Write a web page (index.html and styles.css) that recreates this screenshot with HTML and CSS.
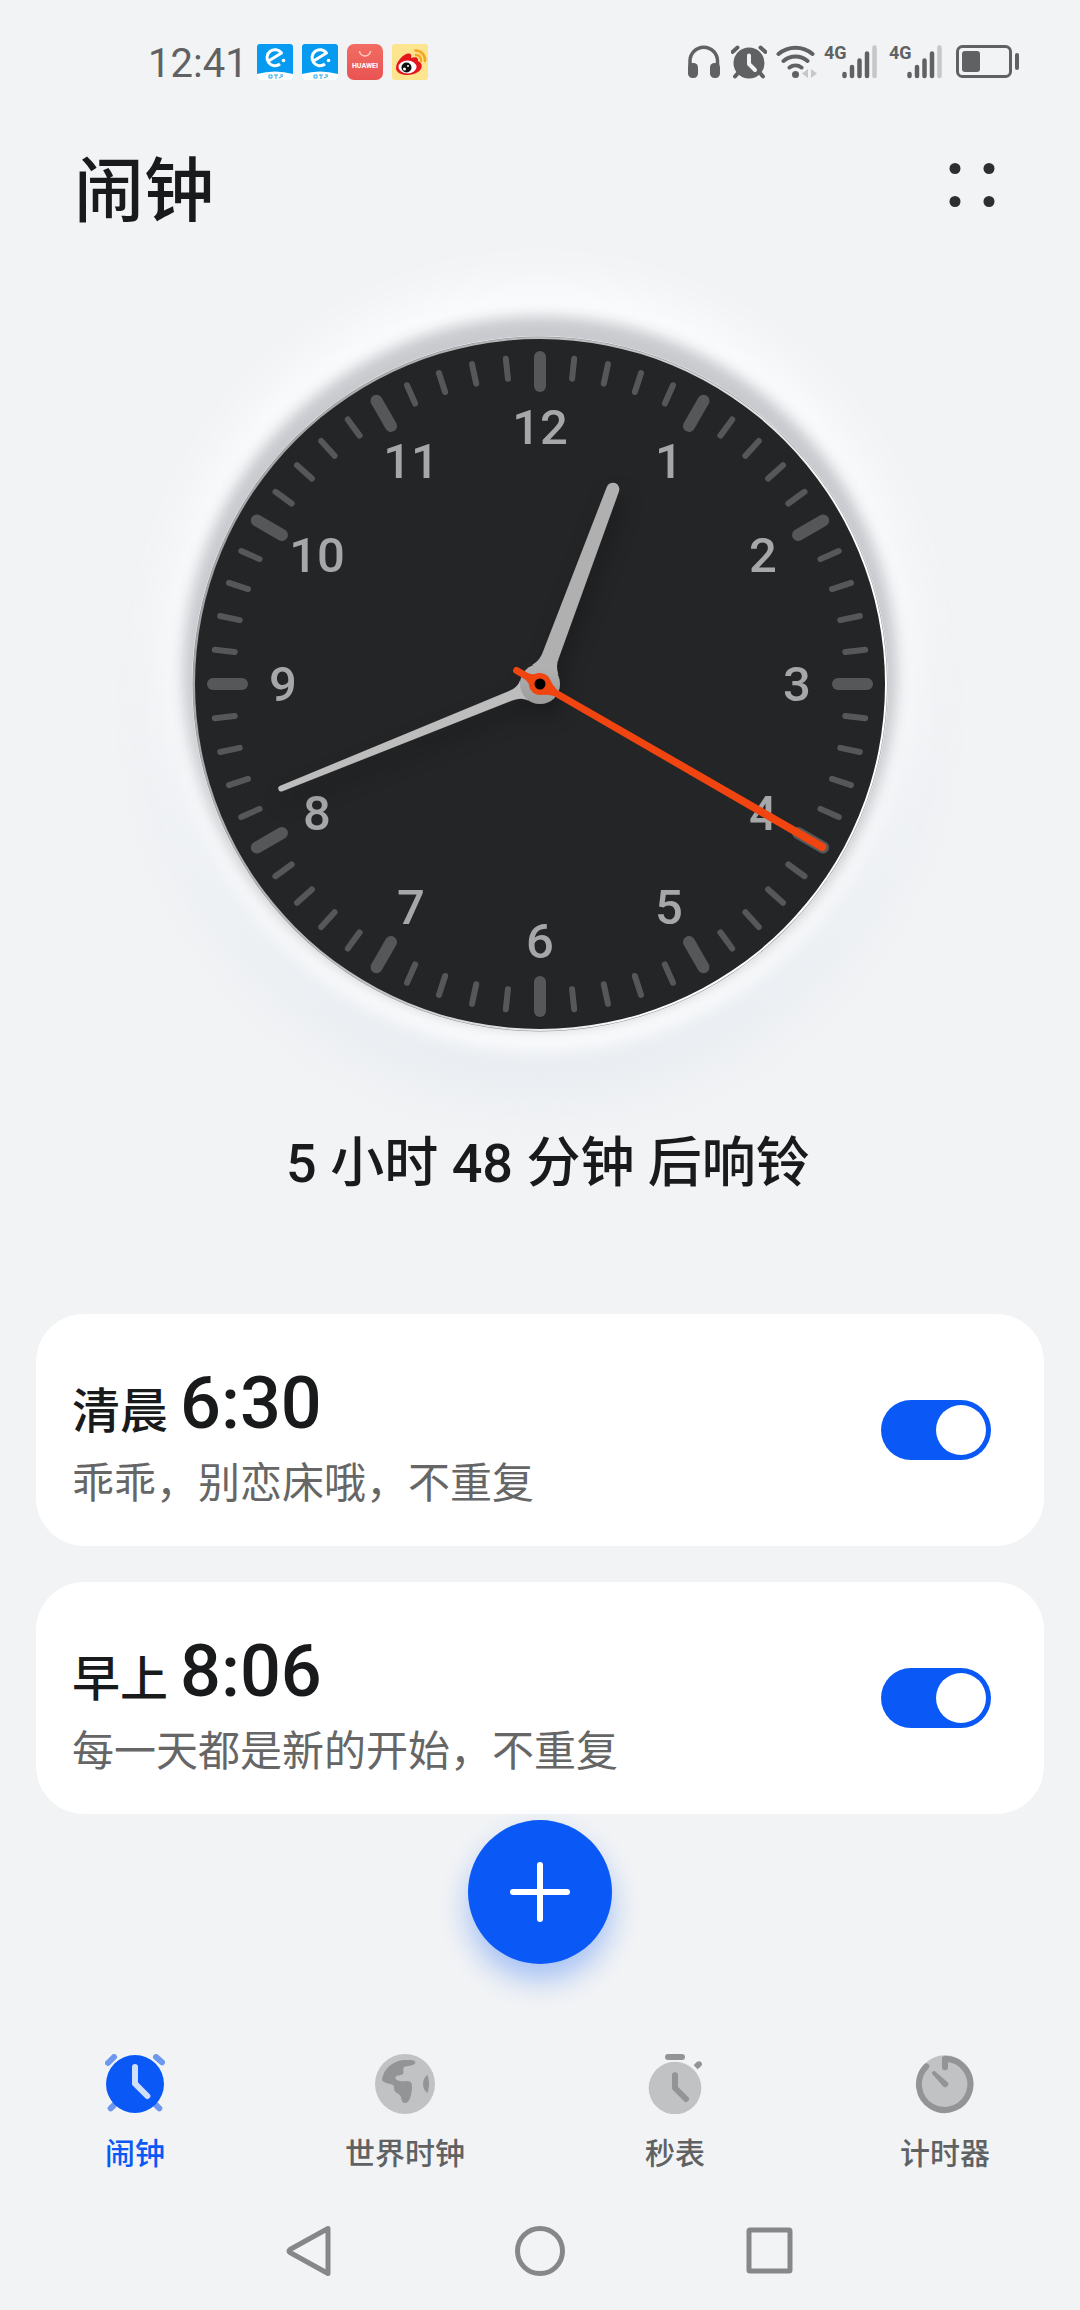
FILE: index.html
```html
<!DOCTYPE html>
<html lang="zh-CN">
<head>
<meta charset="utf-8">
<meta name="viewport" content="width=device-width, initial-scale=1">
<title>闹钟</title>
<link rel="stylesheet" href="styles.css">
</head>
<body>
<div class="screen">
  <div class="status">
    <div class="status-left">
      <span class="status-time">12:41</span>
      <svg class="app" viewBox="0 0 36 36" aria-hidden="true"><g id="ele">
        <rect width="36" height="36" rx="3" fill="#069bf0"/>
        <path d="M0 30Q18 25 36 30V34Q36 36 34 36H2Q0 36 0 34Z" fill="#fff"/>
        <path d="M11.500 17L24.500 9A8 8 0 1 0 23 20" fill="none" stroke="#fff" stroke-width="3" stroke-linejoin="round"/>
        <circle cx="26.500" cy="16.500" r="1.800" fill="#fff"/>
        <path d="M12 31h3v3h-3zM17 31h4M19 31v4M23 31h3M22 34l4-2" fill="none" stroke="#2ba5ee" stroke-width="1"/></g></svg>
      <svg class="app" viewBox="0 0 36 36" aria-hidden="true"><use href="#ele"/></svg>
      <svg class="app" viewBox="0 0 36 36" aria-hidden="true">
        <defs><linearGradient id="hw" x1="0" y1="0" x2="0" y2="1"><stop offset="0" stop-color="#f26d63"/><stop offset="1" stop-color="#e95353"/></linearGradient></defs>
        <rect width="36" height="36" rx="7" fill="url(#hw)"/>
        <path d="M12.500 7a5.500 5 0 0 0 11 0" fill="none" stroke="#ffc9c2" stroke-width="1.500"/>
        <text class="hw-text" x="18" y="23.500" text-anchor="middle">HUAWEI</text></svg>
      <svg class="app" viewBox="0 0 36 36" aria-hidden="true">
        <rect width="36" height="36" rx="3" fill="#fde48f"/>
        <path d="M4 24C4 18 11 10 16 9.500C19 9 20 11 19 14C23 12.500 27 13 26 17C31 19 31 25 26 28C19 33 4 32 4 24Z" fill="#e6161f"/>
        <ellipse cx="15.500" cy="23" rx="9" ry="6.500" fill="#fff"/>
        <circle cx="14.500" cy="23.500" r="5" fill="#111"/><circle cx="12.500" cy="25" r="1.500" fill="#fff"/><circle cx="16" cy="22" r="1" fill="#fff"/>
        <path d="M24 11a5 5 0 0 1 5 6M23.500 6.500A9.500 9.500 0 0 1 33 17" fill="none" stroke="#f5a623" stroke-width="2.500" stroke-linecap="round"/></svg>
    </div>
    <div class="status-right">
      <svg width="32" height="34" viewBox="0 0 32 34" aria-label="耳机"><path d="M2 25V16a13.500 13.500 0 0 1 27.500 0V25" fill="none" stroke="#5f6163" stroke-width="3.500"/><rect x="0" y="18" width="10" height="15" rx="4.500" fill="#5f6163"/><rect x="22" y="18" width="10" height="15" rx="4.500" fill="#5f6163"/></svg>
      <svg class="gap-alarm" width="36" height="34" viewBox="0 0 36 34" aria-label="闹钟"><circle cx="18" cy="18" r="15.500" fill="#5f6163"/><path d="M1.500 7l5-4.500M34.500 7l-5-4.500M7 28l-3 3.500M29 28l3 3.500" stroke="#5f6163" stroke-width="4" stroke-linecap="round"/><path d="M18 10.500V19l6 6" fill="none" stroke="#f1f3f5" stroke-width="4" stroke-linecap="round" stroke-linejoin="round"/></svg>
      <svg class="gap-wifi" width="42" height="34" viewBox="0 0 42 34" aria-label="无线网络"><g fill="none" stroke="#5f6163" stroke-width="4" stroke-linecap="round"><path d="M2.500 9a26 26 0 0 1 34 0M7.500 16a18.500 18.500 0 0 1 24 0M13.500 22.500a10 10 0 0 1 12 0"/></g><circle cx="19.500" cy="29.500" r="3.500" fill="#5f6163"/><path d="M32 24v9l-6-4.500zM35 24v9l6-4.500z" fill="#c6c7c9"/></svg>
      <span class="net">4G</span>
      <svg class="bars" width="36" height="34" viewBox="0 0 36 34" aria-label="信号"><g id="bars" stroke-width="4.500" stroke-linecap="round"><path d="M2.500 29v2M10 22v9M17.500 15.500V31M25 8.500V31" stroke="#5f6163"/><path d="M32.500 2.500V31" stroke="#c6c7c9"/></g></svg>
      <span class="net net-second">4G</span>
      <svg class="bars" width="36" height="34" viewBox="0 0 36 34" aria-label="信号"><use href="#bars"/></svg>
      <svg class="gap-battery" width="64" height="34" viewBox="0 0 64 34" aria-label="电池"><rect x="1.500" y="1.500" width="53" height="30" rx="5" fill="none" stroke="#5f6163" stroke-width="3"/><rect x="6" y="6" width="18" height="21" rx="3" fill="#5f6163"/><path d="M61 10v13" stroke="#5f6163" stroke-width="4" stroke-linecap="round"/></svg>
    </div>
  </div>

  <header class="header">
    <h1 class="title">闹钟</h1>
    <button class="more" type="button" aria-label="更多">
      <svg width="48" height="48" viewBox="0 0 48 48"><g fill="#2d2e30"><circle cx="7" cy="7.500" r="5.500"/><circle cx="41" cy="7.500" r="5.500"/><circle cx="7" cy="40.500" r="5.500"/><circle cx="41" cy="40.500" r="5.500"/></g></svg>
    </button>
  </header>

  <main class="main">
    <div class="clock">
      <svg class="dial" viewBox="-348 -348 696 696" role="img" aria-label="12:41">
        <defs>
          <linearGradient id="rim" x1="0" y1="0.300" x2="1" y2="0.700"><stop offset="0" stop-color="#a2a3a5"/><stop offset="0.450" stop-color="#c4c5c7"/><stop offset="0.800" stop-color="#ffffff"/></linearGradient>
          <linearGradient id="metal" x1="0" y1="0" x2="0" y2="1"><stop offset="0" stop-color="#b3b3b3"/><stop offset="1" stop-color="#9b9b9b"/></linearGradient>
          <filter id="shade" x="-50%" y="-50%" width="200%" height="200%"><feDropShadow dx="4" dy="12" stdDeviation="10" flood-color="#000" flood-opacity="0.250"/></filter>
          <g id="sector">
            <path d="M0-327V-298" stroke-width="12"/>
            <path d="M0-327V-307" transform="rotate(6)"/>
            <path d="M0-327V-307" transform="rotate(12)"/>
            <path d="M0-327V-307" transform="rotate(18)"/>
            <path d="M0-327V-307" transform="rotate(24)"/>
          </g>
        </defs>
        <circle r="347.500" fill="#8d8e90"/>
        <circle r="347" fill="url(#rim)"/>
        <circle r="345" fill="#242527"/>
        <g stroke="#565759" stroke-width="6" stroke-linecap="round">
          <use href="#sector"/><use href="#sector" transform="rotate(30)"/><use href="#sector" transform="rotate(60)"/><use href="#sector" transform="rotate(90)"/><use href="#sector" transform="rotate(120)"/><use href="#sector" transform="rotate(150)"/><use href="#sector" transform="rotate(180)"/><use href="#sector" transform="rotate(210)"/><use href="#sector" transform="rotate(240)"/><use href="#sector" transform="rotate(270)"/><use href="#sector" transform="rotate(300)"/><use href="#sector" transform="rotate(330)"/>
        </g>
        <g class="numerals">
          <text x="0" y="-240">12</text><text x="129" y="-206">1</text><text x="223" y="-112">2</text><text x="257" y="17">3</text><text x="223" y="146">4</text><text x="129" y="240">5</text><text x="0" y="274">6</text><text x="-129" y="240">7</text><text x="-223" y="146">8</text><text x="-257" y="17">9</text><text x="-223" y="-112">10</text><text x="-129" y="-206">11</text>
        </g>
        <g filter="url(#shade)">
          <path transform="rotate(248)" d="M-3-279a3 3 0 0 1 6 0L5-32Q5-22 11-17H-11Q-5-22-5-32Z" fill="#bdbdbd"/>
          <path transform="rotate(20.500)" d="M-6.500-208a6.500 6.500 0 0 1 13 0L8.500-32Q8-22 14-15H-14Q-8-22-8.500-32Z" fill="#b0b0b0"/>
          <circle r="20" fill="url(#metal)"/>
        </g>
        <g transform="rotate(120)" fill="#f04510"><path d="M-4-326a4 4 0 0 1 8 0L3.500-18Q5-12 9-6V6Q4 10 3.500 16V27a3.500 3.500 0 0 1-7 0V16Q-4 10-9 6V-6Q-5-12-3.500-18Z"/><circle r="11"/></g>
        <circle r="5.500" fill="#000"/>
      </svg>
    </div>

    <p class="next">5 小时 48 分钟 后响铃</p>

    <ul class="alarms">
      <li class="card">
        <label class="info" for="alarm-1"><span class="when"><span class="period">清晨</span><span class="time">6:30</span></span><span class="note">乖乖，别恋床哦，不重复</span></label>
        <input class="switch" id="alarm-1" type="checkbox" role="switch" checked>
      </li>
      <li class="card">
        <label class="info" for="alarm-2"><span class="when"><span class="period">早上</span><span class="time">8:06</span></span><span class="note">每一天都是新的开始，不重复</span></label>
        <input class="switch" id="alarm-2" type="checkbox" role="switch" checked>
      </li>
    </ul>

    <button class="add" type="button" aria-label="添加闹钟"><svg width="60" height="60" viewBox="0 0 60 60"><path d="M3 30H57M30 3V57" stroke="#fff" stroke-width="6" stroke-linecap="round"/></svg></button>
  </main>

  <nav class="tabs">
    <a class="tab active" href="#alarm">
      <svg width="60" height="60" viewBox="135 72 180 180" aria-hidden="true"><g stroke="#6e97ee" stroke-width="18" stroke-linecap="round"><path d="M144 99L162 81M306 97L288 81M152 235L164 223M298 235L286 223"/></g><circle cx="225" cy="162" r="87" fill="#0a59f7"/><path d="M225 111V161L262 198" fill="none" stroke="#d0dffb" stroke-width="18" stroke-linecap="round" stroke-linejoin="round"/></svg>
      <span>闹钟</span></a>
    <a class="tab" href="#world">
      <svg width="60" height="60" viewBox="945 72 180 180" aria-hidden="true"><circle cx="1035" cy="162" r="90" fill="#c1c2c3"/><path d="M1066 97C1066 90 1050 89 1032 90C1000 92 972 115 966 147C965 160 990 159 1000 166C1004 172 1000 180 1006 185C1014 191 1022 193 1023 203C1025 216 1034 223 1042 217C1052 208 1056 188 1056 167C1056 157 1049 153 1038 153C1024 155 1008 153 1006 144C1005 133 1022 139 1029 132C1032 127 1028 117 1031 112C1040 106 1064 110 1066 97ZM1102 134C1094 142 1089 150 1089 161C1089 173 1094 183 1102 189C1109 172 1109 151 1102 134Z" fill="#939495"/></svg>
      <span>世界时钟</span></a>
    <a class="tab" href="#stopwatch">
      <svg width="60" height="60" viewBox="135 72 180 180" aria-hidden="true"><circle cx="225" cy="174" r="79" fill="#c1c2c3"/><rect x="195" y="72" width="60" height="18" rx="9" fill="#939495"/><path d="M281 106L290 96C298 90 307 95 306 104C305 108 299 112 293 118Z" fill="#939495"/><path d="M225 136V174L258 207" fill="none" stroke="#939495" stroke-width="18" stroke-linecap="round" stroke-linejoin="round"/></svg>
      <span>秒表</span></a>
    <a class="tab" href="#timer">
      <svg width="60" height="60" viewBox="945 72 180 180" aria-hidden="true"><circle cx="1035" cy="162" r="86" fill="#c1c2c3"/><path d="M1035 112V86A77 77 0 1 1 979 109" fill="none" stroke="#939495" stroke-width="18" stroke-linecap="round" stroke-linejoin="round"/><path d="M1005 124L1042 156A9 9 0 0 1 1029 169L996 131A6 6 0 0 1 1005 124Z" fill="#939495"/></svg>
      <span>计时器</span></a>
  </nav>

  <div class="system">
    <button class="sys" type="button" aria-label="返回"><svg width="54" height="54" viewBox="0 0 54 54"><path d="M45 4.500V49.500L7 28.500Q5 27 7 25.500Z"/></svg></button>
    <button class="sys" type="button" aria-label="主页"><svg width="54" height="54" viewBox="0 0 54 54"><circle cx="27" cy="27" r="22.500"/></svg></button>
    <button class="sys" type="button" aria-label="最近任务"><svg width="54" height="54" viewBox="0 0 54 54"><rect x="6" y="6" width="41" height="41" rx="1"/></svg></button>
  </div>
</div>
</body>
</html>
```

FILE: styles.css
```css
* {
  box-sizing: border-box;
}

body {
  margin: 0;
  background: #f1f3f5;
  color: #191a1b;
  font-family: Roboto, "Noto Sans CJK SC", sans-serif;
}

button {
  padding: 0;
  border: 0;
  background: none;
  cursor: pointer;
}

svg {
  display: block;
}

.screen {
  display: flex;
  flex-direction: column;
  min-height: 100vh;
  overflow: hidden;
}

/* Status bar */
.status {
  display: flex;
  justify-content: space-between;
  align-items: center;
  height: 124px;
  padding: 0 60px 0 148px;
  color: #5f6163;
}

.status-left {
  display: flex;
  align-items: center;
  gap: 9px;
}

.status-time {
  padding-top: 4px;
  font-size: 40px;
  line-height: 48px;
}

.app {
  width: 36px;
  height: 36px;
}

.hw-text {
  fill: #fff;
  font-size: 7px;
  font-weight: 700;
}

.status-right {
  display: flex;
  align-items: flex-start;
}

.gap-alarm {
  margin-left: 11px;
}

.gap-wifi {
  margin-left: 9px;
}

.gap-battery {
  margin-left: 13px;
}

.net {
  width: 18px;
  margin-left: 6px;
  font-family: "Liberation Sans Narrow", Roboto, sans-serif;
  font-size: 18px;
  font-weight: 700;
  line-height: 16px;
}

.net-second {
  margin-left: 11px;
}

/* Header */
.header {
  display: flex;
  justify-content: space-between;
  align-items: center;
  height: 130px;
  padding: 0 84px 0 74px;
}

.title {
  margin: 0;
  padding-top: 6px;
  font-size: 70px;
  font-weight: 500;
  line-height: 96px;
}

.more {
  margin-bottom: 8px;
}

/* Clock */
.main {
  display: flex;
  flex-direction: column;
  align-items: center;
  padding: 82px 36px 0;
}

.clock {
  width: 696px;
  max-width: 80%;
  border-radius: 50%;
  box-shadow:
    0 -11px 14px 9px rgba(56, 62, 78, 0.27),
    0 10px 22px 4px #ffffff,
    0 -24px 60px 22px #ffffff,
    0 32px 60px 16px rgba(212, 222, 232, 0.45);
}

.dial {
  width: 100%;
  height: auto;
}

.numerals {
  fill: #a6a7a9;
  font-size: 49px;
  font-weight: 500;
  text-anchor: middle;
}

.next {
  margin: 92px 0 0;
  padding-left: 16px;
  font-size: 54px;
  font-weight: 500;
  line-height: 80px;
}

/* Alarm list */
.alarms {
  display: flex;
  flex-direction: column;
  gap: 36px;
  width: 100%;
  margin: 110px 0 0;
  padding: 0;
  list-style: none;
}

.card {
  display: flex;
  justify-content: space-between;
  align-items: center;
  padding: 48px 53px 34px 36px;
  border-radius: 48px;
  background: #ffffff;
}

.info {
  display: flex;
  flex-direction: column;
  gap: 2px;
}

.when {
  display: flex;
  align-items: baseline;
  gap: 12px;
  height: 92px;
  line-height: 84px;
}

.period {
  font-size: 48px;
  font-weight: 500;
}

.time {
  font-size: 72px;
  font-weight: 500;
}

.note {
  color: #666666;
  font-size: 42px;
  line-height: 56px;
}

.switch {
  display: flex;
  align-items: center;
  justify-content: flex-start;
  flex: none;
  appearance: none;
  width: 110px;
  height: 60px;
  margin: 0 0 14px;
  padding: 5px;
  border-radius: 30px;
  background: #c6c8cc;
}

.switch::before {
  content: "";
  width: 50px;
  height: 50px;
  border-radius: 50%;
  background: #ffffff;
}

.switch:checked {
  justify-content: flex-end;
  background: #0a59f7;
}

.add {
  display: grid;
  place-items: center;
  width: 144px;
  height: 144px;
  margin-top: 6px;
  border-radius: 50%;
  background: #0a59f7;
  box-shadow: 0 16px 28px rgba(10, 89, 247, 0.32);
}

/* Bottom tabs */
.tabs {
  display: grid;
  grid-template-columns: repeat(4, 1fr);
  margin-top: auto;
  padding-top: 24px;
}

.tab {
  display: flex;
  flex-direction: column;
  align-items: center;
  gap: 20px;
  color: #5f6163;
  font-size: 30px;
  font-weight: 500;
  line-height: 40px;
  text-decoration: none;
}

.tab.active {
  color: #0a59f7;
}

/* System navigation */
.system {
  display: flex;
  justify-content: center;
  align-items: center;
  gap: 176px;
  height: 136px;
  padding-top: 18px;
}

.sys svg {
  fill: none;
  stroke: #868788;
  stroke-width: 5px;
  stroke-linejoin: round;
}
```
